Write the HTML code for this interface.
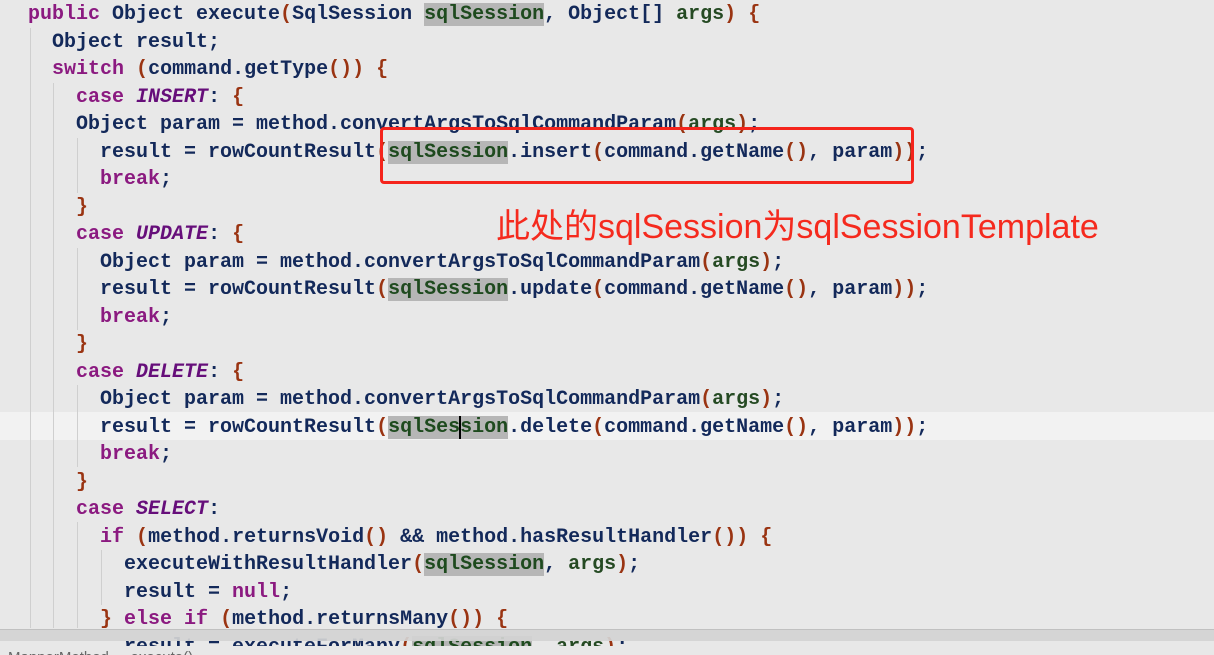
<!DOCTYPE html>
<html><head><meta charset="utf-8"><style>
html,body{margin:0;width:1214px;height:655px;overflow:hidden;}
body{background:#e8e8e8;position:relative;font-family:"Liberation Mono",monospace;}
.l{position:absolute;left:28px;height:27.5px;line-height:27.5px;font-size:20px;font-weight:bold;color:#13295a;white-space:pre;}
.k{color:#8b1a80}.e{color:#660e7a;font-style:italic}.p{color:#9a3412}.g{color:#254a23}.h{background:#b6b6b6;color:#1e4a1e}
.gd{position:absolute;width:1px;background:#cfcfcf}
</style></head><body>
<div style="position:absolute;left:0;top:412px;width:1214px;height:28px;background:#f2f2f2"></div>
<div class="gd" style="left:30px;top:28px;height:600px"></div>
<div class="gd" style="left:53px;top:83px;height:545px"></div>
<div class="gd" style="left:77px;top:138px;height:55px"></div>
<div class="gd" style="left:77px;top:248px;height:82px"></div>
<div class="gd" style="left:77px;top:385px;height:82px"></div>
<div class="gd" style="left:77px;top:522px;height:106px"></div>
<div class="gd" style="left:101px;top:550px;height:55px"></div>
<div class="l" style="top:1px"><span class="k">public</span> Object execute<span class="p">(</span>SqlSession <span class="h">sqlSession</span>, Object[] <span class="g">args</span><span class="p">)</span> <span class="p">{</span></div>
<div class="l" style="top:28.5px">  Object result;</div>
<div class="l" style="top:56px">  <span class="k">switch</span> <span class="p">(</span>command.getType<span class="p">())</span> <span class="p">{</span></div>
<div class="l" style="top:83.5px">    <span class="k">case</span> <span class="e">INSERT</span>: <span class="p">{</span></div>
<div class="l" style="top:111px">    Object param = method.convertArgsToSqlCommandParam<span class="p">(</span><span class="g">args</span><span class="p">)</span>;</div>
<div class="l" style="top:138.5px">      result = rowCountResult<span class="p">(</span><span class="h">sqlSession</span>.insert<span class="p">(</span>command.getName<span class="p">()</span>, param<span class="p">))</span>;</div>
<div class="l" style="top:166px">      <span class="k">break</span>;</div>
<div class="l" style="top:193.5px">    <span class="p">}</span></div>
<div class="l" style="top:221px">    <span class="k">case</span> <span class="e">UPDATE</span>: <span class="p">{</span></div>
<div class="l" style="top:248.5px">      Object param = method.convertArgsToSqlCommandParam<span class="p">(</span><span class="g">args</span><span class="p">)</span>;</div>
<div class="l" style="top:276px">      result = rowCountResult<span class="p">(</span><span class="h">sqlSession</span>.update<span class="p">(</span>command.getName<span class="p">()</span>, param<span class="p">))</span>;</div>
<div class="l" style="top:303.5px">      <span class="k">break</span>;</div>
<div class="l" style="top:331px">    <span class="p">}</span></div>
<div class="l" style="top:358.5px">    <span class="k">case</span> <span class="e">DELETE</span>: <span class="p">{</span></div>
<div class="l" style="top:386px">      Object param = method.convertArgsToSqlCommandParam<span class="p">(</span><span class="g">args</span><span class="p">)</span>;</div>
<div class="l" style="top:413.5px">      result = rowCountResult<span class="p">(</span><span class="h">sqlSes<span style="border-left:2px solid #000;margin-left:-1px;margin-right:-1px"></span>sion</span>.delete<span class="p">(</span>command.getName<span class="p">()</span>, param<span class="p">))</span>;</div>
<div class="l" style="top:441px">      <span class="k">break</span>;</div>
<div class="l" style="top:468.5px">    <span class="p">}</span></div>
<div class="l" style="top:496px">    <span class="k">case</span> <span class="e">SELECT</span>:</div>
<div class="l" style="top:523.5px">      <span class="k">if</span> <span class="p">(</span>method.returnsVoid<span class="p">()</span> &amp;&amp; method.hasResultHandler<span class="p">())</span> <span class="p">{</span></div>
<div class="l" style="top:551px">        executeWithResultHandler<span class="p">(</span><span class="h">sqlSession</span>, <span class="g">args</span><span class="p">)</span>;</div>
<div class="l" style="top:578.5px">        result = <span class="k">null</span>;</div>
<div class="l" style="top:606px">      <span class="p">}</span> <span class="k">else if</span> <span class="p">(</span>method.returnsMany<span class="p">())</span> <span class="p">{</span></div>
<div class="l" style="top:633.5px">        result = executeForMany<span class="p">(</span><span class="h">sqlSession</span>, <span class="g">args</span><span class="p">)</span>;</div>
<div style="position:absolute;left:0;top:629px;width:1214px;height:11px;background:#d4d4d4;border-top:1px solid #bdbdbd;opacity:.92"></div>
<div style="position:absolute;left:0;top:646px;width:1214px;height:9px;background:#e8e8e8"></div>
<div style="position:absolute;left:8px;top:649px;font:15px 'Liberation Sans',sans-serif;color:#666;white-space:pre">MapperMethod  ›  execute()</div>
<div style="position:absolute;left:380px;top:127px;width:528px;height:51px;border:3px solid #f5241c;border-radius:4px"></div>
<div style="position:absolute;left:496px;top:204px;font-size:34px;line-height:46px;color:#f52a1e;font-family:'Liberation Sans','Noto Sans CJK SC',sans-serif;white-space:nowrap">此处的sqlSession为sqlSessionTemplate</div>
</body></html>
